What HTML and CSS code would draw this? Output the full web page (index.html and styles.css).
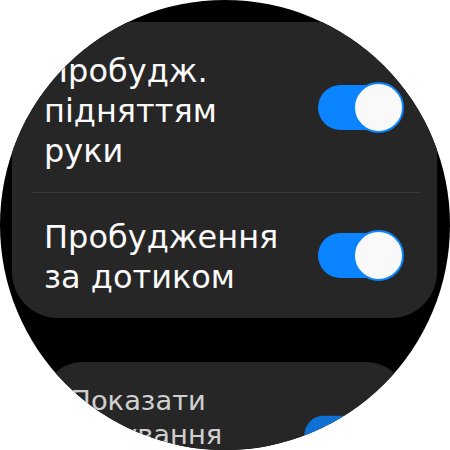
FILE: index.html
```html
<!DOCTYPE html>
<html lang="uk">
<head>
<meta charset="utf-8">
<link rel="stylesheet" href="styles.css">
</head>
<body>
<div class="watch">
  <div class="list">
    <div class="card">
      <div class="row row-first">
        <div class="label">Пробудж.<br>підняттям<br>руки</div>
        <div class="toggle toggle-up"><span class="track"></span><span class="thumb"></span></div>
      </div>
      <div class="divider"></div>
      <div class="row row-second">
        <div class="label">Пробудження<br>за дотиком</div>
        <div class="toggle toggle-up-small"><span class="track"></span><span class="thumb"></span></div>
      </div>
    </div>
    <div class="card card-far">
      <div class="row row-third">
        <div class="label">Показати<br>керування<br>медіа</div>
        <div class="toggle"><span class="track"></span><span class="thumb"></span></div>
      </div>
    </div>
  </div>
</div>
</body>
</html>
```
FILE: styles.css
```css
html, body {
  margin: 0;
  padding: 0;
  background: #ffffff;
}
.watch {
  width: 450px;
  height: 450px;
  border-radius: 50%;
  overflow: hidden;
  background: #000000;
}
.list {
  display: flex;
  flex-direction: column;
  align-items: flex-start;
  padding-top: 22px;
  gap: 44px;
}
.card {
  width: 425px;
  margin-left: 12px;
  background: #262626;
  border-radius: 46px;
  padding-bottom: 21px;
}
.card-far {
  transform: scale(0.854);
  transform-origin: 50% 0;
}
.row {
  display: flex;
  align-items: center;
  padding: 0 33px 0 32px;
}
.row-first {
  padding-top: 29px;
  padding-bottom: 21px;
}
.row-second {
  padding-top: 24px;
}
.row-third {
  padding-top: 25px;
  opacity: 0.8;
}
.label {
  flex: 1;
  font-family: "DejaVu Sans", "Open Sans", sans-serif;
  font-size: 32px;
  line-height: 40px;
  color: #fafafa;
}
.divider {
  height: 1px;
  margin: 0 18px 0 19px;
  background: #3a3a3a;
}
.toggle {
  position: relative;
  width: 86px;
  height: 51px;
  flex: none;
}
.toggle-up {
  margin-bottom: 7px;
}
.toggle-up-small {
  margin-bottom: 3px;
}
.track {
  position: absolute;
  left: 0;
  top: 3px;
  width: 84px;
  height: 45px;
  border-radius: 23px;
  background: #0a84ff;
}
.thumb {
  position: absolute;
  right: 0;
  top: 0;
  width: 51px;
  height: 51px;
  box-sizing: border-box;
  border-radius: 50%;
  border: 2px solid #0a84ff;
  background: #f9f9f9;
}
```
